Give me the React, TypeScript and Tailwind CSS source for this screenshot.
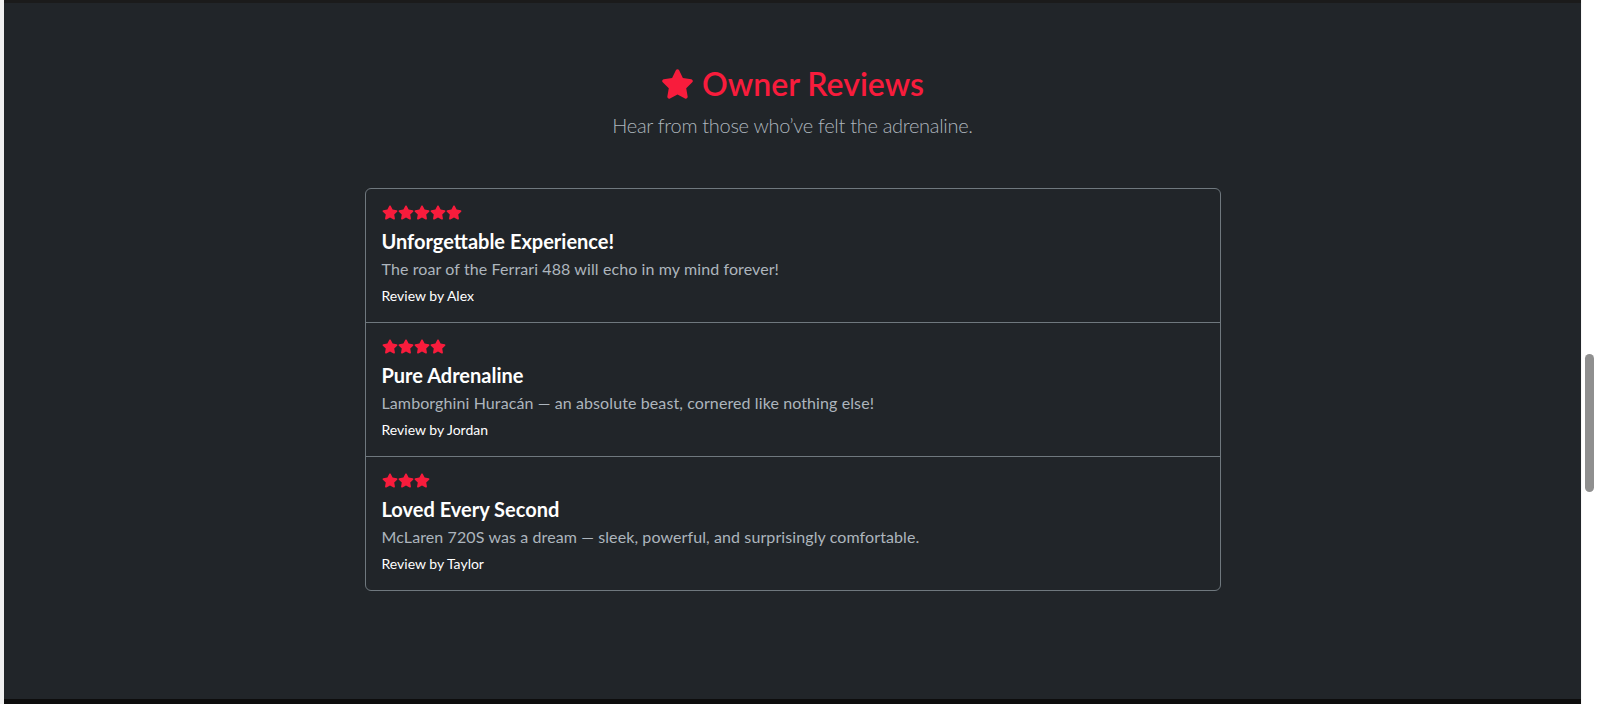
import { FaStar } from "react-icons/fa";

interface Review {
  stars: number;
  title: string;
  text: string;
  author: string;
}

const reviews: Review[] = [
  {
    stars: 5,
    title: "Unforgettable Experience!",
    text: "The roar of the Ferrari 488 will echo in my mind forever!",
    author: "Alex",
  },
  {
    stars: 4,
    title: "Pure Adrenaline",
    text: "Lamborghini Huracán — an absolute beast, cornered like nothing else!",
    author: "Jordan",
  },
  {
    stars: 3,
    title: "Loved Every Second",
    text: "McLaren 720S was a dream — sleek, powerful, and surprisingly comfortable.",
    author: "Taylor",
  },
];

const ReviewRow = ({ review, last }: { review: Review; last: boolean }) => (
  <li
    className={[
      "flex flex-col px-4 pt-4 pb-4",
      last ? "" : "border-b border-[#6f787e]",
    ].join(" ")}
  >
    <div className="mb-[9px] flex h-[15px] items-center text-[#f81c3c]">
      {Array.from({ length: review.stars }).map((_, i) => (
        <FaStar key={i} className="h-[15px] w-[16px]" />
      ))}
    </div>
    <h5 className="mb-1 text-[20px] leading-[24px] font-bold text-white">
      {review.title}
    </h5>
    <p className="mb-1 text-[16px] leading-[24px] tracking-[0.1px] text-[#adb5bd]">
      {review.text}
    </p>
    <small className="text-[14px] leading-[21px] text-white">Review by {review.author}</small>
  </li>
);

export default function App() {
  return (
    <div
      className="flex h-[704px] w-full overflow-hidden bg-[#f0f0f0]"
      style={{ fontFamily: '"Lato", "Noto Sans", sans-serif' }}
    >
      <div className="ml-[4px] flex w-[1577px] flex-col">
        <div className="h-[3px] bg-[#1b1b1b]" />
        <main className="flex flex-1 flex-col items-center bg-[#212529] pt-[62px]">
          <h2 className="mb-[7px] flex items-center gap-[8px] text-[32px] leading-[38px] font-semibold text-[#f81c3c]">
            <FaStar className="h-[30px] w-[33px]" />
            Owner Reviews
          </h2>
          <p className="mb-[48px] text-[20px] leading-[30px] font-light tracking-[-0.3px] text-[#adb5bd]">
            Hear from those who’ve felt the adrenaline.
          </p>
          <ul className="w-[856px] rounded-[6px] border border-[#6f787e]">
            {reviews.map((r, i) => (
              <ReviewRow key={r.author} review={r} last={i === reviews.length - 1} />
            ))}
          </ul>
        </main>
        <div className="h-[5px] bg-[#0d0d0d]" />
      </div>
      <div className="relative w-[19px] border-l border-[#f7f7f7] bg-white">
        <div className="absolute top-[354px] left-[3px] h-[138px] w-[9px] rounded-full bg-[#8f8f8f]" />
      </div>
    </div>
  );
}
